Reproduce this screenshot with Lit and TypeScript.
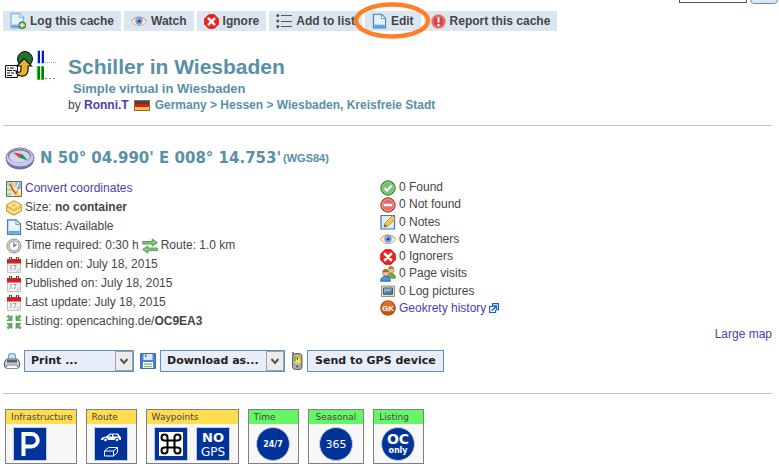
import { LitElement, html, css, svg, TemplateResult } from "lit";
import { customElement } from "lit/decorators.js";

const icon = (body: unknown, w = 16, h = 16, vb = "0 0 16 16", cls = "icon") =>
  html`<svg class=${cls} width=${w} height=${h} viewBox=${vb} aria-hidden="true">${body}</svg>`;

const page = svg`<path d="M1.500 .8h8.700l4.300 4.300v10.200h-13z" fill="#c3e0fa" stroke="#4484c6" stroke-width="1.200"/><path d="M3 2.200h6.500v4h4v5.500H3z" fill="#e9f5ff"/><path d="M10 .8v4.500h4.500z" fill="#fff" stroke="#4484c6" stroke-width=".8"/><path d="M2.500 12h11v2.500h-11z" fill="#5da3e6"/>`;
const eye = svg`<path d="M.4 8.500C3 3 12.500 2 15.600 8.500 12 14 4 14 .4 8.500z" fill="#fbeee2" stroke="#d9a888"/><path d="M.5 7.800C4 2.800 11.500 2.500 15.500 8" fill="none" stroke="#cf9f84"/><circle cx="8" cy="8" r="3.700" fill="#6f9fe0"/><circle cx="8" cy="7.800" r="1.500" fill="#173b75"/><circle cx="7" cy="6.800" r=".7" fill="#fff"/>`;
const ignore = svg`<path d="M5 .8h6L15.200 5v6L11 15.200H5L.8 11V5z" fill="#f62222" stroke="#c00d0d"/><path d="M5 5l6 6M11 5l-6 6" stroke="#fff" stroke-width="2.600" stroke-linecap="round"/>`;
const list = svg`<g fill="#555"><circle cx="1.800" cy="2.500" r="1.500"/><circle cx="1.800" cy="8" r="1.500"/><circle cx="1.800" cy="13.500" r="1.500"/><path d="M5 2h11v1H5zM5 8h11v1H5zM5 13h11v1H5z"/></g>`;
const report = svg`<circle cx="8" cy="8" r="7.400" fill="#d8433c" stroke="#efa9a4"/><circle cx="8" cy="8" r="5.800" fill="none" stroke="#e98580"/><path d="M8 3.500v5.500" stroke="#fff" stroke-width="2.200"/><circle cx="8" cy="11.700" r="1.300" fill="#fff"/>`;
const logPage = svg`<path d="M1 .8h9.500l4 4v11.700H1z" fill="#b9dafa" stroke="#75aadb"/><path d="M2 2h7v4h4v6H2z" fill="#e6f3ff"/><path d="M10.500 .8v4h4z" fill="#fff" stroke="#75aadb" stroke-width=".8"/><path d="M1.500 13.500h9v2.500h-9z" fill="#5da3e6"/><circle cx="13" cy="13.500" r="3.700" fill="#62a746" stroke="#3f7a2a"/><path d="M13 11v5M10.500 13.500h5" stroke="#fff" stroke-width="1.500"/>`;
const map = svg`<path d="M.5.5h15v15H.5z" fill="#eeebb5" stroke="#5f6f62"/><path d="M1 1h6l1 7-3 7H1z" fill="#b5dc9a"/><path d="M9 1h6v8l-5-1z" fill="#8fb7e2"/><path d="M7 1l3 8 5 6H9l-3-5z" fill="#f0d26d"/><path d="M1 6l14 3M6 15l7-14M1 11h8" stroke="#fff"/><path d="M4 3l3 6 3 4" stroke="#e5443a" stroke-width="1.500" fill="none"/><path d="M10 13l3-7" stroke="#df8a37"/>`;
const box = svg`<path d="M8 .7l7.300 4v6.500L8 15.300.7 11.200V4.700z" fill="#efbd4c" stroke="#c9922d"/><path d="M8 1.500l6.500 3.500L8 9 1.500 5z" fill="#fde79a"/><path d="M1.200 8.500L8 12l6.800-3.500v1.500L8 13.800l-6.800-3.800z" fill="#fff3cb"/><path d="M5 5l3-2 3 2-3 2z" fill="#f3c658"/>`;
const clock = svg`<circle cx="8" cy="8" r="7" fill="#d5d8db" stroke="#a39466"/><circle cx="8" cy="8" r="5" fill="#f7fbff" stroke="#8f9aa6"/><path d="M8 4.500V8.300l2.500-1.800" stroke="#54749c" fill="none" stroke-width="1.200"/>`;
const route = svg`<g fill="#7ccb72" stroke="#3f9148" stroke-width=".8"><path d="M.7 3.500h9.500V1l5.300 3.700L10.200 8V6H.7z"/><path d="M15.300 10H5.800V8L.5 11.500l5.300 3.800v-2.600h9.500z"/></g>`;
const cal = svg`<path d="M1.500 3h13v12.500h-13z" fill="#f2f2f2" stroke="#c6c6c6"/><path d="M1 2h14v4.500H1z" fill="#d81f1f"/><path d="M3 0h3v3.500H3zM10 0h3v3.500h-3z" fill="#773232"/><path d="M4 .5h1v2H4zM11 .5h1v2h-1z" fill="#eee"/><path d="M4 9l1-.8v5M7 8.500h3l-1.700 4.700" fill="none" stroke="#a3a3a3"/><path d="M11 15l1-3 3-.5z" fill="#fff" stroke="#bbb" stroke-width=".7"/>`;
const listing = svg`<g fill="#62b35d" stroke="#3d8d42" stroke-width=".7"><path d="M1 2.500L2.500 1 4.500 3 6 1.500V6.500H1L3 4.500zM15 2.500L13.500 1l-2 2L10 1.500V6.500h5L13 4.500zM1 13.500L2.500 15l2-2L6 14.500V9.500H1L3 11.500zM15 13.500L13.500 15l-2-2-1.500 1.500V9.500h5L13 11.500z"/></g>`;
const found = svg`<circle cx="8" cy="8" r="7.200" fill="#48a447" stroke="#378538"/><circle cx="8" cy="8" r="5.800" fill="#75c26c" stroke="#9bd796"/><path d="M4.500 8l2.500 2.700L11.600 5.500" fill="none" stroke="#fff" stroke-width="2"/>`;
const notFound = svg`<circle cx="8" cy="8" r="7.200" fill="#d94943" stroke="#b9312e"/><circle cx="8" cy="8" r="5.900" fill="#e36c65" stroke="#f0a19c"/><path d="M3.800 6.800h8.400v2.500H3.800z" fill="#fff"/>`;
const notes = svg`<path d="M1 1.500h13.500v13.500H1z" fill="#d8ebfb" stroke="#3c7abb" stroke-width="1.200"/><path d="M3 4.500h8M3 7h6" stroke="#fff"/><path d="M4 13l1-4 7.500-7.500 3 3L8 12z" fill="#f5c94e" stroke="#b1812e" stroke-width=".8"/><path d="M4 13l.8-3 2.200 2.200z" fill="#665744"/>`;
const people = svg`<circle cx="11" cy="4" r="3" fill="#efbd8e" stroke="#a77544" stroke-width=".6"/><path d="M8 3c0-4 6-4 6 0z" fill="#ba8240"/><path d="M7.500 12c0-6 7.500-6 8 0z" fill="#75ad4a" stroke="#4d8330"/><circle cx="5.500" cy="7" r="3" fill="#f1c397" stroke="#a46f3e" stroke-width=".6"/><path d="M2.500 6.300c0-4.300 6-4.300 6 0z" fill="#9d6632"/><path d="M.7 15.200c0-6.500 9.600-6.500 9.600 0z" fill="#4e96df" stroke="#256ab0"/>`;
const screen = svg`<path d="M1.500 3h13v10.500h-13z" fill="#dcdcd8" stroke="#92928d"/><path d="M3.500 5h9v6.300h-9z" fill="#8eb4cf" stroke="#485b68"/><path d="M4 10l3-2 2 1 3-3v5H4z" fill="#527890"/>`;
const gk = svg`<circle cx="8" cy="8" r="7.800" fill="#c54e14"/><circle cx="8" cy="6.500" r="5.800" fill="#dc6d27"/><text x="8" y="11" font-size="8" font-weight="700" text-anchor="middle" fill="#fff">GK</text>`;
const ext = svg`<g fill="none" stroke="#0f62dc" stroke-width="1.200"><path d="M3.500 3V.6h6v6H7.500M4 3.500H.6v6h6V7"/></g><path d="M3 7.500l4-4M4 3h3.500v3.500" fill="none" stroke="#0f62dc" stroke-width="1.400"/>`;
const printer = svg`<path d="M4 7L5 .8h6l1 6.200z" fill="#c9e5fc" stroke="#5a9bd5"/><path d="M2.500 6h11l2 3v5h-15V9z" fill="#c6cbd2" stroke="#5e6570"/><path d="M3 7h10v2.500H3z" fill="#59616c"/><path d="M3 12h10l1 3.500H2z" fill="#f8fafc" stroke="#858d96"/>`;
const disk = svg`<path d="M.6.600h14.800v14.800H.6z" fill="#4f82d8" stroke="#315fae"/><path d="M3.500 1h9v6h-9z" fill="#dbe9fb"/><path d="M5 1.500h1.500V4H5z" fill="#446eb5"/><path d="M3 9h10v6H3z" fill="#fff"/><path d="M4 10.500h8v1.200H4zM4 13h8v1.200H4z" fill="#75b765"/>`;
const gps = svg`<path d="M1 0h2v4H1z" fill="#888"/><rect x="1.500" y="1.500" width="9.500" height="16" rx="3" fill="#a5a5a5" stroke="#606060"/><path d="M3 3.500h6.500v8H3z" fill="#f3ea4f"/><path d="M3 3.500h3L5 9 3 11z" fill="#60cb5a"/><path d="M7 3.500h2.500V8z" fill="#ed8a35"/><path d="M6 5h1v3H6z" fill="#c22"/><circle cx="6.200" cy="14.500" r="1.700" fill="#555" stroke="#ddd" stroke-width=".7"/>`;
const compass = svg`<ellipse cx="15" cy="12.500" rx="14" ry="10" fill="#6f6f9a"/><ellipse cx="15" cy="10.500" rx="14" ry="9.500" fill="#c9c9ef" stroke="#7c7ca8"/><ellipse cx="14.500" cy="8.800" rx="11.500" ry="6.800" fill="#77779c"/><ellipse cx="14.500" cy="9.500" rx="10.500" ry="6" fill="#d4d4ea"/><path d="M8 5.500l9 1.500-3 3.500z" fill="#e33d35"/><path d="M17 7l6 6.500-9-3z" fill="#209052"/>`;
const flag = svg`<path d="M0 0h16v11H0z" fill="#8a6a55"/><path d="M1 1h14v3H1z" fill="#444"/><path d="M1 4h14v3H1z" fill="#e01818"/><path d="M1 7h14v3H1z" fill="#f6cc2c"/>`;
const logo = svg`<circle cx="20" cy="9" r="7.500" fill="#23732c" stroke="#111"/><path d="M.5 15.500h12v12H.5z" fill="#fff" stroke="#111"/><path d="M2 18h2m1 0h4M2 20.500h5m1 0h2M2 23h3m1 0h3M2 25.500h5" stroke="#111" stroke-width="1.200"/><path d="M11 21c2 2 5 2 5-2v-3h-4l7-7.500 7.500 7.500H23c1 8-3 11-7 10-3-.5-5-2-5-5z" fill="#e9b32a" stroke="#111" stroke-width="1.200"/>
<g shape-rendering="crispEdges"><path d="M32 0h3v14h-3zM36 0h3v14h-3z" fill="#9cd0ff"/><path d="M33 1h2v12h-2zM37 1h2v12h-2z" fill="#1010dc"/><path d="M40 12h1v1h-1zM42 12h1v1h-1zM44 12h1v1h-1zM46 12h1v1h-1zM48 12h1v1h-1zM50 12h1v1h-1z" fill="#60b0ff"/><path d="M32 16h3v14h-3zM36 16h3v14h-3z" fill="#0ad80a"/><path d="M33 17h2v12h-2zM37 17h2v12h-2z" fill="#067806"/><path d="M40 28h2v1h-2zM44 28h2v1h-2zM48 28h2v1h-2z" fill="#0ac80a"/></g>`;

const tile = (body: unknown) => icon(svg`<path d="M0 0h34v34H0z" fill="#c4cde0"/><path d="M1 1h32v32H1z" fill="#003399"/>${body}`, 34, 34, "0 0 34 34", "tile");
const disc = (body: unknown) => icon(svg`<circle cx="17" cy="17" r="16.500" fill="#003399" stroke="#c4cde0"/>${body}`, 34, 34, "0 0 34 34", "tile");
const parking = tile(svg`<path d="M10.500 29V7h8a5.500 5.500 0 0 1 0 12.500H11" fill="none" stroke="#fff" stroke-width="4"/>`);
const car = tile(svg`<path d="M7 12.500c0-2 2-2.500 5-3l4-3h8l3 4v2.500H7z" fill="#fff"/><path d="M14 9.500l3-2h1v2zM19.500 7.500h3.500l1 2h-4.500z" fill="#003399"/><circle cx="11.500" cy="13" r="1.800" fill="#fff" stroke="#003399"/><circle cx="23" cy="13" r="1.800" fill="#fff" stroke="#003399"/><path d="M10.500 24h9v5h-9zM10.500 24l4-3.500h9l-4 3.500M23.500 20.500v5l-4 3.500" fill="none" stroke="#fff"/>`);
const knot = tile(svg`<path d="M5 5h24v24H5z" fill="#fff"/><path d="M13.500 13.500h7v7h-7zM13.500 13.500h-3a3 3 0 1 1 3-3zM20.500 13.500v-3a3 3 0 1 1 3 3zM20.500 20.500h3a3 3 0 1 1-3 3zM13.500 20.500v3a3 3 0 1 1-3-3z" fill="none" stroke="#000" stroke-width="2"/>`);
const noGps = tile(svg`<text class="wide" x="17" y="15" font-size="13" text-anchor="middle" fill="#fff">NO</text><text class="thin" x="17" y="29" font-size="12" text-anchor="middle" fill="#fff">GPS</text>`);
const allDay = disc(svg`<text class="wide" x="17" y="20" font-size="8" text-anchor="middle" fill="#fff">24/7</text>`);
const allYear = disc(svg`<text class="thin" x="17" y="21" font-size="11" text-anchor="middle" fill="#fff">365</text>`);
const ocOnly = disc(svg`<text class="wide" x="17" y="17" font-size="14" text-anchor="middle" fill="#fff">OC</text><text class="wide" x="17" y="26" font-size="8" text-anchor="middle" fill="#fff">only</text>`);

interface Group { name: string; kind: string; tiles: TemplateResult[] }

@customElement("app-root")
export class AppRoot extends LitElement {
  static styles = css`
    :host { display: block; overflow: hidden; background: #fff; color: #464646; font: 12px/19px "Liberation Sans", Arial, sans-serif; }
    * { box-sizing: border-box; }
    svg { display: block; flex: none; }
    a { color: #4a40b4; text-decoration: none; }
    b { font-weight: 700; }
    .search { display: flex; align-items: flex-end; justify-content: flex-end; gap: 3px; height: 4px; padding-right: 1px; }
    .query { width: 68px; height: 20px; margin-bottom: 1px; border: 1px solid #555; background: #fff; }
    .go { width: 28px; height: 20px; border: 1px solid #5f8fc4; border-radius: 4px; background: #dbe6f1; flex: none; }
    .toolbar { display: flex; gap: 3px; margin: 7px 3px 0; }
    .action { position: relative; display: flex; align-items: center; gap: 4px; height: 20px; padding: 0 7px; background: #dbe6f0; color: #464646; font-weight: 700; white-space: nowrap; }
    .ring { position: absolute; left: -12px; top: -9px; z-index: 1; pointer-events: none; }
    .head { display: flex; gap: 12px; margin: 19px 5px 0; }
    h1 { margin: 0; font-size: 21px; line-height: 26px; color: #5890a8; }
    h2 { margin: 0 0 0 5px; font-size: 13px; line-height: 18px; color: #5890a8; }
    .titles { margin-top: 4px; }
    .place { display: flex; align-items: center; line-height: 14px; }
    .place svg { margin: 0 5px; }
    .path { color: #5890a8; font-weight: 700; }
    hr { height: 1px; margin: 0 7px 0 3px; border: 0; background: #c4c4c4; }
    .head + hr { margin-top: 13px; }
    .coords { display: flex; align-items: center; gap: 2px; margin: 20px 5px 0; color: #5890a8; }
    .position { margin-left: 3px; font: 700 15px/24px "DejaVu Sans", Verdana, sans-serif; }
    .datum { font-size: 11px; font-weight: 700; }
    .info { display: grid; grid-template-columns: 374px 1fr; margin: 9px 6px 0; }
    ul { list-style: none; margin: 0; padding: 0; }
    li { display: flex; align-items: center; gap: 3px; }
    .facts li { height: 19px; }
    .counts { display: flex; flex-direction: column; margin-bottom: 14px; }
    .counts li { flex: 1; line-height: 17px; }
    .large { margin: -6px 7px 0; text-align: right; }
    .exports { display: flex; align-items: center; gap: 4px; margin: 6px 4px 21px; }
    .picker { position: relative; display: block; margin-right: 2px; }
    .picker svg { position: absolute; right: 1px; top: 1px; pointer-events: none; }
    select, .send { height: 22px; border: 1px solid #5e8fbf; border-radius: 0; background: #e8eef7; color: #222; font: 700 11px/20px "DejaVu Sans", Verdana, sans-serif; appearance: none; }
    select { padding: 0 0 0 6px; display: block; }
    .print { width: 110px; }
    .download { width: 125px; }
    .send { padding: 0 7px; }
    .attributes { display: flex; gap: 9px; margin: 15px 5px 3px; }
    .group { border: 1px solid #808080; background: #f7f7f7; }
    .label { padding: 0 3px 0 5px; font: 9px/14px "DejaVu Sans", Verdana, sans-serif; background: #ffdd4f; }
    .green .label { background: #66f566; }
    .tiles { display: flex; gap: 8px; padding: 3px 8px 2px 7px; }
    .roomy .label { padding: 0 7px; }
    .roomy .tiles { padding: 3px 10px 2px; }
    .wide { font-family: "DejaVu Sans", sans-serif; font-weight: 700; }
    .thin { font-family: "DejaVu Sans", sans-serif; }
  `;

  private groups: Group[] = [
    { name: "Infrastructure", kind: "yellow", tiles: [parking] },
    { name: "Route", kind: "yellow", tiles: [car] },
    { name: "Waypoints", kind: "yellow", tiles: [knot, noGps] },
    { name: "Time", kind: "green", tiles: [allDay] },
    { name: "Seasonal", kind: "green roomy", tiles: [allYear] },
    { name: "Listing", kind: "green", tiles: [ocOnly] },
  ];

  private arrow() {
    return icon(svg`<path d="M.5.5h17v19H.5z" fill="#ececec" stroke="#a0a0a0"/><path d="M5.500 8l3.500 4 3.500-4" fill="none" stroke="#555" stroke-width="2"/>`, 18, 20, "0 0 18 20");
  }

  render() {
    return html`
      <div class="search"><input class="query" aria-label="Search"><button class="go" aria-label="Go"></button></div>
      <nav class="toolbar">
        <a class="action" href="#log">${icon(logPage, 16, 18, "0 0 17 18")}Log this cache</a>
        <a class="action" href="#watch">${icon(eye)}Watch</a>
        <a class="action" href="#ignore">${icon(ignore, 15, 15)}Ignore</a>
        <a class="action" href="#list">${icon(list)}Add to list</a>
        <a class="action" href="#edit">${icon(page, 15, 16)}Edit${icon(svg`<ellipse cx="39" cy="18.500" rx="36" ry="16" fill="none" stroke="#ff7f27" stroke-width="4.500"/>`, 78, 37, "0 0 78 37", "ring")}</a>
        <a class="action" href="#report">${icon(report, 15, 15)}Report this cache</a>
      </nav>
      <header class="head">
        ${icon(logo, 51, 31, "0 0 51 31")}
        <div class="titles">
          <h1>Schiller in Wiesbaden</h1>
          <h2>Simple virtual in Wiesbaden</h2>
          <div class="place">by&nbsp;<a href="#owner"><b>Ronni.T</b></a>${icon(flag, 16, 11, "0 0 16 11")}<span class="path">Germany &gt; Hessen &gt; Wiesbaden, Kreisfreie Stadt</span></div>
        </div>
      </header>
      <hr>
      <div class="coords">${icon(compass, 30, 23, "0 0 30 23")}<span class="position">N 50° 04.990' E 008° 14.753'</span><span class="datum">(WGS84)</span></div>
      <section class="info">
        <ul class="facts">
          <li>${icon(map)}<a href="#convert">Convert coordinates</a></li>
          <li>${icon(box)}<span>Size: <b>no container</b></span></li>
          <li>${icon(page)}Status: Available</li>
          <li>${icon(clock)}Time required: 0:30 h ${icon(route)}Route: 1.0 km</li>
          <li>${icon(cal)}Hidden on: July 18, 2015</li>
          <li>${icon(cal)}Published on: July 18, 2015</li>
          <li>${icon(cal)}Last update: July 18, 2015</li>
          <li>${icon(listing)}<span>Listing: opencaching.de/<b>OC9EA3</b></span></li>
        </ul>
        <ul class="counts">
          <li>${icon(found)}0 Found</li>
          <li>${icon(notFound)}0 Not found</li>
          <li>${icon(notes)}0 Notes</li>
          <li>${icon(eye)}0 Watchers</li>
          <li>${icon(ignore)}0 Ignorers</li>
          <li>${icon(people)}0 Page visits</li>
          <li>${icon(screen)}0 Log pictures</li>
          <li>${icon(gk)}<a href="#geokrety">Geokrety history</a>${icon(ext, 10, 10, "0 0 10 10")}</li>
        </ul>
      </section>
      <div class="large"><a href="#map">Large map</a></div>
      <div class="exports">
        ${icon(printer)}<span class="picker"><select class="print" aria-label="Print"><option>Print ...</option></select>${this.arrow()}</span>
        ${icon(disk)}<span class="picker"><select class="download" aria-label="Download"><option>Download as...</option></select>${this.arrow()}</span>
        ${icon(gps, 12, 18, "0 0 12 18")}<button class="send">Send to GPS device</button>
      </div>
      <hr>
      <section class="attributes">
        ${this.groups.map((g) => html`<div class="group ${g.kind}"><div class="label">${g.name}</div><div class="tiles">${g.tiles}</div></div>`)}
      </section>`;
  }
}
